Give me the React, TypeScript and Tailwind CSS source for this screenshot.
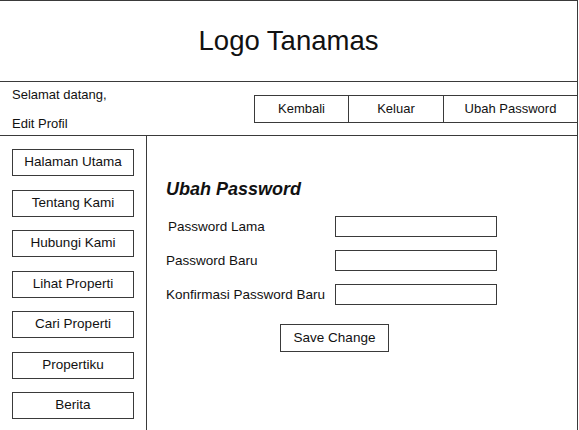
import React from "react";

const menu = [
  "Halaman Utama",
  "Tentang Kami",
  "Hubungi Kami",
  "Lihat Properti",
  "Cari Properti",
  "Propertiku",
  "Berita",
];

const fields = ["Password Lama", "Password Baru", "Konfirmasi Password Baru"];

const App: React.FC = () => {
  return (
    <div
      className="w-[578px] h-[430px] flex flex-col bg-white text-[#111] overflow-hidden border-r border-[#3a3a3a]"
      style={{ fontFamily: '"Liberation Sans", Arial, sans-serif' }}
    >
      {/* header / logo */}
      <div className="h-[82px] flex-shrink-0 flex items-center justify-center border-t border-b border-[#3a3a3a]">
        <h1 className="text-[27.5px] leading-none">Logo Tanamas</h1>
      </div>

      {/* greeting + top nav */}
      <div className="h-[54px] flex-shrink-0 flex items-start justify-between border-b border-[#3a3a3a]">
        <div className="pl-3 pt-[5px] flex flex-col text-[13px] leading-[15px] gap-[14px]">
          <span>Selamat datang,</span>
          <span>Edit Profil</span>
        </div>
        <div className="mt-[13px] h-[28px] flex border-t border-b border-l border-[#3a3a3a] text-[13px]">
          <button className="w-[94px] border-r border-[#3a3a3a] flex items-center justify-center">
            Kembali
          </button>
          <button className="w-[95px] border-r border-[#3a3a3a] flex items-center justify-center">
            Keluar
          </button>
          <button className="w-[133px] flex items-center justify-center">
            Ubah Password
          </button>
        </div>
      </div>

      <div className="flex flex-1 min-h-0">
        {/* sidebar */}
        <div className="w-[147px] flex-shrink-0 border-r border-[#3a3a3a] flex flex-col gap-[13.5px] pt-[13px] pl-3">
          {menu.map((item) => (
            <button
              key={item}
              className="w-[122px] h-[27px] flex-shrink-0 border border-[#3a3a3a] text-[13.5px] flex items-center justify-center"
            >
              {item}
            </button>
          ))}
        </div>

        {/* form */}
        <div className="flex-1 pl-[19px] pt-[43px]">
          <h2 className="text-[18px] leading-[20px] font-bold italic">Ubah Password</h2>
          <div className="mt-[17px] flex flex-col gap-[13px]">
            {fields.map((label, i) => (
              <div key={label} className="flex items-center h-[21px]">
                <span
                  className={`w-[169px] text-[13.5px] leading-none ${i === 0 ? "pl-[2px]" : ""}`}
                >
                  {label}
                </span>
                <input
                  type="password"
                  className="w-[162px] h-[21px] border border-[#3a3a3a] outline-none"
                />
              </div>
            ))}
          </div>
          <button className="mt-[19px] ml-[114px] w-[109px] h-[28px] border border-[#3a3a3a] text-[13.5px] flex items-center justify-center">
            Save Change
          </button>
        </div>
      </div>
    </div>
  );
};

export default App;
